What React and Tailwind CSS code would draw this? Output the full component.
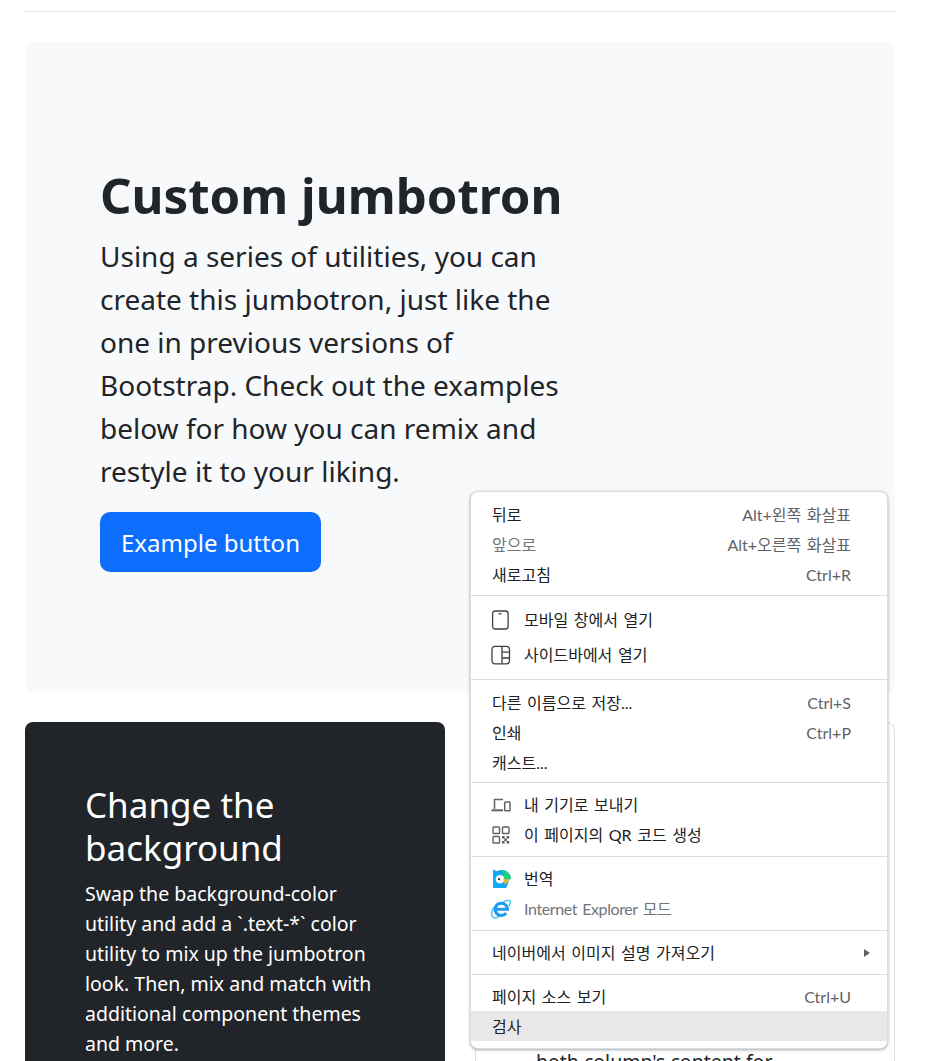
const FONT = "font-['Noto_Sans','Noto_Sans_CJK_KR',sans-serif]";

function MobileIcon() {
  return (
    <svg className="-ml-px" width="18" height="20" viewBox="0 0 18 20" fill="none" stroke="#3c4043" strokeWidth="1.3">
      <rect x="1.600" y="1" width="15.500" height="18" rx="2.500" />
      <path d="M7.500 3.800h3" />
    </svg>
  );
}

function SidebarIcon() {
  return (
    <svg className="-ml-px" width="20" height="20" viewBox="0 0 20 20" fill="none" stroke="#3c4043" strokeWidth="1.3">
      <rect x="1" y="1.400" width="17.500" height="17.400" rx="3" />
      <path d="M11 1.400v17.400M11 7.200h7.500M11 13h7.500" />
    </svg>
  );
}

function DevicesIcon() {
  return (
    <svg className="-ml-px" width="20" height="14" viewBox="0 0 20 14" fill="none" stroke="#5f6368" strokeWidth="1.500">
      <path d="M12 1.500H3.500v9.500" />
      <path d="M0.500 12.300h11.500" strokeWidth="2" />
      <rect x="13.700" y="4" width="5.300" height="8.800" rx="0.800" />
    </svg>
  );
}

function QrIcon() {
  return (
    <svg width="18" height="18" viewBox="0 0 18 18" fill="none" stroke="#5f6368" strokeWidth="1.400">
      <rect x="1" y="1" width="6.500" height="6.500" rx="0.800" />
      <rect x="10.500" y="1" width="6.500" height="6.500" rx="0.800" />
      <rect x="1" y="10.500" width="6.500" height="6.500" rx="0.800" />
      <path d="M10 10h2.600v2.600H10zM14.600 10h2.600v2.600h-2.600zM12.300 12.500h2.600v2.600h-2.600zM10 15h2.600v2.600H10zM14.600 15h2.600v2.600h-2.600z" fill="#5f6368" stroke="none" />
    </svg>
  );
}

function PapagoIcon() {
  return (
    <svg width="20" height="20" viewBox="0 0 20 20">
      <path d="M1 0.500l4 1.700C6.500 1.300 8 1 10 1c5 0 9 4 9 9.200h-2c-.4 3.500-1.500 6.300-3 8.800H2a1 1 0 0 1-1-1z" fill="#12a8f5" />
      <path d="M9 1c5.500 0 10 4 10 9.200h-8.500A8 8 0 0 0 9 1z" fill="#1fd077" />
      <circle cx="8" cy="10.200" r="4.300" fill="#fff" />
      <circle cx="7" cy="10.200" r="1.100" fill="#333" />
      <path d="M10.500 10.200H17c-.6 2.500-2.500 4.300-4.700 5.300.6-2 .3-3.800-1.800-5.300z" fill="#fdbb1f" />
    </svg>
  );
}

function IeIcon() {
  return (
    <svg className="-ml-px" width="20" height="20" viewBox="0 0 20 20" fill="none">
      <path d="M4.500 6.500C1 10.500 0 15 1.500 17.500c1.700 2.300 5 1.300 7.500-.5M12.500 3c3-1.700 6-2.300 6.800-.8.600 1.300-.2 3.200-1.300 4.800" stroke="#3cc4f5" strokeWidth="1.400" />
      <path d="M4 10.300h12.500A6.200 6.200 0 1 0 15.200 14.200" stroke="#1e9bf0" strokeWidth="3" />
    </svg>
  );
}

function Row({ label, shortcut, icon, disabled, active, h = 'h-[30px]', arrow, nudge, tight }) {
  return (
    <div className={`flex items-center pl-[21px] pr-[36px] text-[16px] leading-none [word-spacing:1.500px] ${h} ${nudge ? 'pt-[2px]' : ''} ${active ? 'bg-[#e8e8e8]' : ''}`}>
      {icon && <span className="w-[32px] flex items-center shrink-0">{icon}</span>}
      <span className={`${disabled ? 'text-[#70757a]' : 'text-[#202124]'} ${tight ? 'tracking-[-0.400px]' : ''}`}>{label}</span>
      {shortcut && <span className="ml-auto text-[#5f6368]">{shortcut}</span>}
      {arrow && <span className="ml-auto -mr-[19px] w-0 h-0 border-y-[4px] border-y-transparent border-l-[6px] border-l-[#5f6368]" />}
    </div>
  );
}

function Group({ children, className }) {
  return <div className={className}>{children}</div>;
}

function ContextMenu() {
  return (
    <div className="absolute left-[470px] top-[491px] w-[418px] bg-white rounded-lg border border-[#dadce0] shadow-[0_1px_3px_rgba(60,64,67,0.45)] overflow-hidden font-['Lato','Noto_Sans_CJK_KR',sans-serif]">
      <Group className="pt-[8px] pb-[5px] border-b border-[#dadce0]">
        <Row label="뒤로" shortcut="Alt+왼쪽 화살표" />
        <Row label="앞으로" shortcut="Alt+오른쪽 화살표" disabled />
        <Row label="새로고침" shortcut="Ctrl+R" />
      </Group>
      <Group className="pt-[6px] pb-[7px] border-b border-[#dadce0]">
        <Row label="모바일 창에서 열기" icon={<MobileIcon />} h="h-[35px]" />
        <Row label="사이드바에서 열기" icon={<SidebarIcon />} h="h-[35px]" />
      </Group>
      <Group className="pt-[8px] pb-[4px] border-b border-[#dadce0]">
        <Row label="다른 이름으로 저장..." shortcut="Ctrl+S" />
        <Row label="인쇄" shortcut="Ctrl+P" />
        <Row label="캐스트..." />
      </Group>
      <Group className="pt-[7px] pb-[6px] border-b border-[#dadce0]">
        <Row label="내 기기로 보내기" icon={<DevicesIcon />} />
        <Row label="이 페이지의 QR 코드 생성" icon={<QrIcon />} />
      </Group>
      <Group className="pt-[7px] pb-[6px] border-b border-[#dadce0]">
        <Row label="번역" icon={<PapagoIcon />} />
        <Row label="Internet Explorer 모드" icon={<IeIcon />} disabled tight />
      </Group>
      <Group className="pt-[7px] pb-[6px] border-b border-[#dadce0]">
        <Row label="네이버에서 이미지 설명 가져오기" arrow />
      </Group>
      <Group className="pt-[6px] pb-[7px]">
        <Row label="페이지 소스 보기" shortcut="Ctrl+U" nudge />
        <Row label="검사" active nudge />
      </Group>
    </div>
  );
}

export default function App() {
  return (
    <div className={`relative h-[1061px] overflow-hidden bg-white text-[#212529] ${FONT}`}>
      <div className="ml-[25px] w-[870px] pt-[11px]">
        <div className="border-t border-[#e5e5e5]" />

        {/* Jumbotron */}
        <div className="mt-[30px] h-[650px] rounded-lg bg-[#f8f9fa] px-[75px] pt-[123px]">
          <h1 className="text-[49.200px] font-bold leading-[60px]">Custom jumbotron</h1>
          <p className="mt-[10px] w-[480px] text-[28px] leading-[43px]">
            Using a series of utilities, you can create this jumbotron, just like the one in previous versions of Bootstrap. Check out the examples below for how you can remix and restyle it to your liking.
          </p>
          <button className="mt-[19px] block h-[60px] w-[221px] rounded-[10px] bg-[#0d6efd] pt-[2px] text-[24px] text-white">Example button</button>
        </div>

        {/* Two columns */}
        <div className="mt-[30px] grid grid-cols-2 gap-[30px]">
          <div className="h-[650px] rounded-lg bg-[#212529] px-[60px] pt-[61px] text-white">
            <h2 className="text-[35px] leading-[43px]">Change the background</h2>
            <p className="mt-[10px] text-[19.500px] leading-[30px]">
              Swap the background-color utility and add a `.text-*` color utility to mix up the jumbotron look. Then, mix and match with additional component themes and more.
            </p>
          </div>
          <div className="h-[650px] rounded-lg border border-[#dee2e6] px-[60px] pt-[60px]">
            <h2 className="text-[35px] leading-[43px]">Add borders</h2>
            <p className="mt-[11px] text-[19.500px] leading-[30px]">
              Or, keep it light and add a border for some added definition to the boundaries of your content. Be sure to look under the hood at the source HTML here as we've adjusted the alignment and sizing of<br />both column's content for equal-height.
            </p>
          </div>
        </div>
      </div>
      <ContextMenu />
    </div>
  );
}
